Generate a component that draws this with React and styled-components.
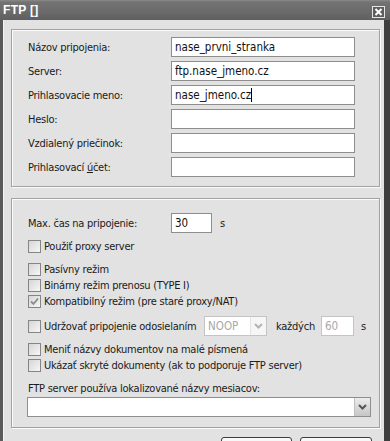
import React from 'react';
import styled, { createGlobalStyle } from 'styled-components';

const Global = createGlobalStyle`
    html, body { margin: 0; padding: 0; background: #e2e2e2; }
    body { font-family: "DejaVu Sans Condensed", "Liberation Sans", sans-serif; }
`

const Window = styled.div`
    width: 390px;
    height: 441px;
    overflow: hidden;
    display: flex;
    flex-direction: column;
    background: #e2e2e2;
    box-sizing: border-box;
`
const TitleBar = styled.div`
    height: 20px;
    flex: none;
    display: flex;
    align-items: center;
    justify-content: space-between;
    padding: 0 5px 0 3px;
    background: linear-gradient(#8a8a8a 0, #737373 2px, #6a6a6a 60%, #5f5f5f 100%);
    color: #fff;
    font-family: "Liberation Sans", Arial, sans-serif;
    font-weight: bold;
    font-size: 12px;
    letter-spacing: 0.3px;
`
const CloseButton = styled.div`
    width: 13px;
    height: 12px;
    box-sizing: border-box;
    border: 1px solid #e6e6e6;
    background: #5e5e5e;
    display: flex;
    align-items: center;
    justify-content: center;
    margin-top: 3px;
`
const Body = styled.div`
    flex: 1;
    display: flex;
    flex-direction: column;
    padding: 9px 4px 0 8px;
    border-left: 3px solid #5a5a5a;
    border-right: 6px solid #3e3e3e;
    box-shadow: inset 1px 0 #f4f4f4;
`
const GroupBox = styled.div`
    border: 1px solid #a2a2a2;
    box-shadow: inset 1px 1px #fbfbfb, 1px 1px #fbfbfb;
    padding: ${({ pad }) => pad};
    font-size: 11px;
    letter-spacing: -0.25px;
    color: #1a1a1a;
    margin-bottom: ${({ mb }) => mb || 0}px;
`
const FieldGrid = styled.div`
    display: grid;
    grid-template-columns: 143px 184px;
    row-gap: 4px;
    align-items: center;
`
const Label = styled.span`
    white-space: nowrap;
`
const TextBox = styled.div`
    height: 20px;
    width: ${({ w }) => (w ? `${w}px` : 'auto')};
    box-sizing: border-box;
    border: 1px solid ${({ disabled }) => (disabled ? '#c4c4c4' : '#8e8e8e')};
    background: #fff;
    display: flex;
    align-items: center;
    padding-left: 3px;
    font-size: 11.5px;
    letter-spacing: 0;
    color: ${({ disabled }) => (disabled ? '#a8a8a8' : '#111')};
    white-space: nowrap;
    flex: none;
`
const Caret = styled.span`
    display: inline-block;
    width: 1px;
    height: 14px;
    background: #000;
`
const Row = styled.div`
    display: flex;
    align-items: center;
    white-space: nowrap;
    height: ${({ h }) => h || 16}px;
    margin-top: ${({ mt }) => mt || 0}px;
`
const Box = styled.span`
    width: 13px;
    height: 13px;
    box-sizing: border-box;
    border: 1px solid #858585;
    background: linear-gradient(135deg, #d6d6d6, #f6f6f6);
    display: flex;
    align-items: center;
    justify-content: center;
    margin-right: 3px;
    flex: none;
`
const CheckLabel = styled.div`
    display: flex;
    align-items: center;
    white-space: nowrap;
    width: ${({ w }) => (w ? `${w}px` : 'auto')};
    flex: none;
`
const Select = styled.div`
    height: 20px;
    width: ${({ w }) => (w ? `${w}px` : 'auto')};
    flex: ${({ w }) => (w ? 'none' : '1')};
    box-sizing: border-box;
    border: 1px solid ${({ disabled }) => (disabled ? '#c4c4c4' : '#8e8e8e')};
    background: #fff;
    display: flex;
    align-items: center;
    padding-left: 3px;
    font-size: 11.5px;
    letter-spacing: 0;
    color: ${({ disabled }) => (disabled ? '#a8a8a8' : '#111')};
`
const SelectText = styled.span`
    flex: 1;
`
const DropButton = styled.span`
    width: 16px;
    height: 100%;
    display: flex;
    align-items: center;
    justify-content: center;
    box-sizing: border-box;
    border-left: 1px solid ${({ disabled }) => (disabled ? '#e4e4e4' : '#c0c0c0')};
    background: ${({ disabled }) => (disabled ? '#f6f6f6' : 'linear-gradient(#ececec, #c6c6c6)')};
`
const FullRow = styled.div`
    display: flex;
    margin: 1px 8px 0 -1px;
`
const Unit = styled.span`
    display: flex;
    margin-left: ${({ ml }) => ml}px;
`
const Buttons = styled.div`
    display: flex;
    justify-content: flex-end;
    gap: 8px;
    padding-right: 8px;
    margin-top: 9px;
`
const Button = styled.div`
    width: ${({ w }) => w}px;
    height: 24px;
    box-sizing: border-box;
    border: 1px solid #3c3c3c;
    border-radius: 3px;
    background: linear-gradient(#fafafa, #e0e0e0);
`

const Check = ({ checked }) => (
    <Box>
        {checked && (
            <svg width="9" height="9" viewBox="0 0 9 9">
                <path d="M1 4.5 L3.5 7 L8 1.5" fill="none" stroke="#8c8c8c" strokeWidth="1.8" />
            </svg>
        )}
    </Box>
)

const Chevron = ({ color }) => (
    <svg width="9" height="6" viewBox="0 0 9 6">
        <path d="M1 1 L4.5 4.5 L8 1" fill="none" stroke={color} strokeWidth="2" />
    </svg>
)

const fields = [
    { label: 'Názov pripojenia:', value: 'nase_prvni_stranka' },
    { label: 'Server:', value: 'ftp.nase_jmeno.cz' },
    { label: 'Prihlasovacie meno:', value: 'nase_jmeno.cz', caret: true },
    { label: 'Heslo:', value: '' },
    { label: 'Vzdialený priečinok:', value: '' },
    { label: <>Prihlasovací <u>ú</u>čet:</>, value: '' },
]

const App = () => {
    return (
        <Window>
            <Global />
            <TitleBar>
                <span>FTP []</span>
                <CloseButton>
                    <svg width="9" height="8" viewBox="0 0 9 8">
                        <path d="M1.5 1 L7.5 7 M7.5 1 L1.5 7" stroke="#fff" strokeWidth="2" />
                    </svg>
                </CloseButton>
            </TitleBar>
            <Body>
                <GroupBox pad="7px 0 9px 16px" mb={11}>
                    <FieldGrid>
                        {fields.map((f, i) => (
                            <React.Fragment key={i}>
                                <Label>{f.label}</Label>
                                <TextBox>
                                    {f.value}
                                    {f.caret && <Caret />}
                                </TextBox>
                            </React.Fragment>
                        ))}
                    </FieldGrid>
                </GroupBox>
                <GroupBox pad="14px 0 10px 16px">
                    <Row h={20}>
                        <CheckLabel w={143}>Max. čas na pripojenie:</CheckLabel>
                        <TextBox w={41}>30</TextBox>
                        <Unit ml={8}>s</Unit>
                    </Row>
                    <Row mt={5}>
                        <Check />Použiť proxy server
                    </Row>
                    <Row mt={7}>
                        <Check />Pasívny režim
                    </Row>
                    <Row>
                        <Check />Binárny režim prenosu (TYPE I)
                    </Row>
                    <Row>
                        <Check checked />Kompatibilný režim (pre staré proxy/NAT)
                    </Row>
                    <Row h={20} mt={7}>
                        <CheckLabel w={176}>
                            <Check />Udržovať pripojenie odosielaním
                        </CheckLabel>
                        <Select w={63} disabled>
                            <SelectText>NOOP</SelectText>
                            <DropButton disabled>
                                <Chevron color="#b4b4b4" />
                            </DropButton>
                        </Select>
                        <Unit ml={9}>každých</Unit>
                        <Unit ml={6}>
                            <TextBox w={33} disabled>60</TextBox>
                        </Unit>
                        <Unit ml={7}>s</Unit>
                    </Row>
                    <Row mt={5}>
                        <Check />Meniť názvy dokumentov na malé písmená
                    </Row>
                    <Row>
                        <Check />Ukázať skryté dokumenty (ak to podporuje FTP server)
                    </Row>
                    <Row mt={7}>FTP server používa lokalizované názvy mesiacov:</Row>
                    <FullRow>
                        <Select>
                            <SelectText />
                            <DropButton>
                                <Chevron color="#555" />
                            </DropButton>
                        </Select>
                    </FullRow>
                </GroupBox>
                <Buttons>
                    <Button w={71} />
                    <Button w={72} />
                </Buttons>
            </Body>
        </Window>
    )
}

export default App;
